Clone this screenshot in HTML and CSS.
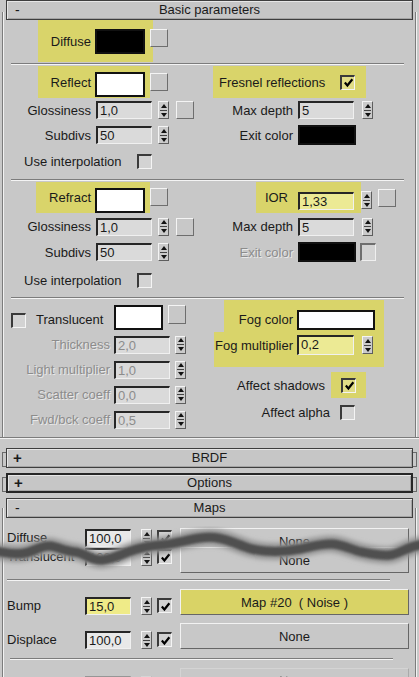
FILE: index.html
```html
<!DOCTYPE html>
<html>
<head>
<meta charset="utf-8">
<link rel="stylesheet" href="styles.css">
</head>
<body>
<div class="panel">
  <div class="rhead"><span class="sign">-</span><span class="title">Basic parameters</span></div>
  <div class="rbody">
    <div class="row rA">
      <div class="hl hl-diffuse"><span class="hlab">Diffuse</span><span class="sw sw-black sw-main"></span></div>
      <span class="btn btn-diffuse"></span>
    </div>
    <div class="sep sep1"></div>
    <div class="row rB">
      <div class="L">
        <div class="hl hl-reflect"><span class="hlab">Reflect</span><span class="sw sw-white sw-main sw-low"></span></div>
        <span class="btn btn-reflect"></span>
      </div>
      <div class="R">
        <div class="hl hl-fresnel"><span>Fresnel reflections</span><span class="chk chk-auto"><svg viewBox="0 0 12 12" width="11" height="11"><path d="M2 6l2.8 3.2L10.2 2.4" fill="none" stroke="#000" stroke-width="2.4"/></svg></span></div>
      </div>
    </div>
    <div class="row rC">
      <div class="L"><span class="lab">Glossiness</span><span class="inp">1,0</span><span class="spin"><i class="up"></i><i class="mid"></i><i class="dn"></i></span><span class="btn btn-map"></span></div>
      <div class="R"><span class="lab">Max depth</span><span class="inp">5</span><span class="spin spin-r"><i class="up"></i><i class="mid"></i><i class="dn"></i></span></div>
    </div>
    <div class="row rD">
      <div class="L"><span class="lab">Subdivs</span><span class="inp">50</span><span class="spin"><i class="up"></i><i class="mid"></i><i class="dn"></i></span></div>
      <div class="R"><span class="lab">Exit color</span><span class="sw sw-black sw-exit"></span></div>
    </div>
    <div class="row rE">
      <div class="L"><span class="interp">Use interpolation</span><span class="chk"></span></div>
    </div>
    <div class="sep sep2"></div>
    <div class="row rF">
      <div class="L">
        <div class="hl hl-refract"><span class="hlab">Refract</span><span class="sw sw-white sw-main sw-bottom"></span></div>
        <span class="btn btn-refract"></span>
      </div>
      <div class="R">
        <div class="hl hl-ior"><span class="hlab">IOR</span><span class="inp inp-y inp-ior">1,33</span></div>
        <span class="spin spin-ior"><i class="up"></i><i class="mid"></i><i class="dn"></i></span>
        <span class="btn btn-ior"></span>
      </div>
    </div>
    <div class="row rG">
      <div class="L"><span class="lab">Glossiness</span><span class="inp">1,0</span><span class="spin"><i class="up"></i><i class="mid"></i><i class="dn"></i></span><span class="btn btn-map"></span></div>
      <div class="R"><span class="lab">Max depth</span><span class="inp">5</span><span class="spin spin-r"><i class="up"></i><i class="mid"></i><i class="dn"></i></span></div>
    </div>
    <div class="row rH">
      <div class="L"><span class="lab">Subdivs</span><span class="inp">50</span><span class="spin"><i class="up"></i><i class="mid"></i><i class="dn"></i></span></div>
      <div class="R"><span class="lab dis">Exit color</span><span class="sw sw-black sw-exit"></span><span class="chk chk-dim"></span></div>
    </div>
    <div class="row rI">
      <div class="L"><span class="interp">Use interpolation</span><span class="chk"></span></div>
    </div>
    <div class="sep sep3"></div>
    <div class="sec3">
      <div class="c3L">
        <div class="trow"><span class="chk chk-tr"></span><span class="trtext">Translucent</span><span class="sw sw-white sw-tr"></span><span class="btn btn-tr"></span></div>
        <div class="prow"><span class="plab dis">Thickness</span><span class="inp inp-dis">2,0</span><span class="spin"><i class="up"></i><i class="mid"></i><i class="dn"></i></span></div>
        <div class="prow"><span class="plab dis">Light multiplier</span><span class="inp inp-dis">1,0</span><span class="spin"><i class="up"></i><i class="mid"></i><i class="dn"></i></span></div>
        <div class="prow"><span class="plab dis">Scatter coeff</span><span class="inp inp-dis">0,0</span><span class="spin"><i class="up"></i><i class="mid"></i><i class="dn"></i></span></div>
        <div class="prow"><span class="plab dis">Fwd/bck coeff</span><span class="inp inp-dis">0,5</span><span class="spin"><i class="up"></i><i class="mid"></i><i class="dn"></i></span></div>
      </div>
      <div class="c3R">
        <div class="hl hl-fogc"><span class="hlab">Fog color</span><span class="sw sw-white sw-fog"></span></div>
        <div class="hl hl-fogm"><span class="hlab">Fog multiplier</span><span class="inp inp-y inp-fog">0,2</span><span class="spin spin-fog"><i class="up"></i><i class="mid"></i><i class="dn"></i></span></div>
        <div class="asrow"><span class="astext">Affect shadows</span><span class="hl hl-as"><span class="chk"><svg viewBox="0 0 12 12" width="11" height="11"><path d="M2 6l2.8 3.2L10.2 2.4" fill="none" stroke="#000" stroke-width="2.4"/></svg></span></span></div>
        <div class="aarow"><span class="aatext">Affect alpha</span><span class="chk"></span></div>
      </div>
    </div>
  </div>

  <div class="rclosed first"><div class="rhead"><span class="sign plus">+</span><span class="title">BRDF</span></div></div>
  <div class="rclosed"><div class="rhead focus"><span class="sign plus">+</span><span class="title">Options</span></div></div>

  <div class="rmaps">
    <div class="rhead"><span class="sign">-</span><span class="title">Maps</span></div>
    <div class="mbody">
      <div class="mrow m1">
        <span class="mlab">Diffuse</span><span class="inp minp">100,0</span><span class="spin mspin"><i class="up"></i><i class="mid"></i><i class="dn"></i></span><span class="chk mchk"><svg viewBox="0 0 12 12" width="11" height="11"><path d="M2 6l2.8 3.2L10.2 2.4" fill="none" stroke="#000" stroke-width="2.4"/></svg></span><span class="mbtn">None</span>
      </div>
      <div class="mrow m2">
        <span class="mlab">Translucent</span><span class="inp minp">100,0</span><span class="spin mspin"><i class="up"></i><i class="mid"></i><i class="dn"></i></span><span class="chk mchk"><svg viewBox="0 0 12 12" width="11" height="11"><path d="M2 6l2.8 3.2L10.2 2.4" fill="none" stroke="#000" stroke-width="2.4"/></svg></span><span class="mbtn">None</span>
      </div>
      <div class="sep msep1"></div>
      <div class="mrow low m3">
        <span class="mlab">Bump</span><span class="inp minp inp-yb">15,0</span><span class="spin mspin"><i class="up"></i><i class="mid"></i><i class="dn"></i></span><span class="chk mchk"><svg viewBox="0 0 12 12" width="11" height="11"><path d="M2 6l2.8 3.2L10.2 2.4" fill="none" stroke="#000" stroke-width="2.4"/></svg></span><span class="mbtn mbtn-y">Map #20&nbsp;&nbsp;( Noise )</span>
      </div>
      <div class="mrow low m4">
        <span class="mlab">Displace</span><span class="inp minp">100,0</span><span class="spin mspin"><i class="up"></i><i class="mid"></i><i class="dn"></i></span><span class="chk mchk"><svg viewBox="0 0 12 12" width="11" height="11"><path d="M2 6l2.8 3.2L10.2 2.4" fill="none" stroke="#000" stroke-width="2.4"/></svg></span><span class="mbtn">None</span>
      </div>
      <div class="sep msep2"></div>
      <div class="mrow low m5">
        <span class="mlab"></span><span class="inp minp"></span><span class="spin mspin"><i class="up"></i><i class="mid"></i><i class="dn"></i></span><span class="chk mchk"></span><span class="mbtn mbtn-fade">None</span>
      </div>
    </div>
  </div>

  <svg class="tear" width="419" height="60" viewBox="0 0 419 60">
    <defs>
      <filter id="b1" x="-5%" y="-50%" width="110%" height="200%"><feGaussianBlur stdDeviation="2.4"/></filter>
      <filter id="b2" x="-5%" y="-50%" width="110%" height="200%"><feGaussianBlur stdDeviation="1.2"/></filter>
    </defs>
    <path d="M-5 26 C 8 28, 15 30, 25 28 S 42 20, 50 21 S 65 26, 75 27 S 92 36, 102 35 S 120 30, 128 27 S 145 21, 160 20 S 185 15, 200 13 S 225 14, 235 18 S 252 25, 265 26 S 290 26, 300 24 S 322 18, 333 19 S 352 25, 362 27 S 380 31, 390 30 S 405 22, 424 19" fill="none" stroke="#8e8e8e" stroke-width="16" filter="url(#b1)"/>
    <path d="M-5 26 C 8 28, 15 30, 25 28 S 42 20, 50 21 S 65 26, 75 27 S 92 36, 102 35 S 120 30, 128 27 S 145 21, 160 20 S 185 15, 200 13 S 225 14, 235 18 S 252 25, 265 26 S 290 26, 300 24 S 322 18, 333 19 S 352 25, 362 27 S 380 31, 390 30 S 405 22, 424 19" fill="none" stroke="#505050" stroke-width="9" filter="url(#b2)"/>
  </svg>
</div>
</body>
</html>
```

FILE: styles.css
```css
* { box-sizing: border-box; }
html, body { margin: 0; padding: 0; }
body {
  width: 419px;
  height: 677px;
  overflow: hidden;
  background: #c8c8c8;
  font-family: "Liberation Sans", Arial, sans-serif;
  font-size: 13px;
  color: #1a1a1a;
}
.panel { position: relative; width: 419px; height: 677px; overflow: hidden; }

/* rollout headers */
.rhead {
  position: relative;
  z-index: 1;
  height: 20px;
  margin: 0 6px;
  border: 1px solid #3e3e3e;
  background: #c6c6c6;
  box-shadow: inset 1px 1px 0 #e6e6e6, inset -1px -1px 0 #a4a4a4;
  display: flex;
  align-items: center;
  line-height: 18px;
}
.rhead.focus { border: 2px solid #262626; }
.rhead .sign { width: 22px; padding-left: 8px; font-size: 14px; }
.rhead .sign.plus { font-weight: bold; padding-left: 6px; font-size: 15px; }
.rhead .title { flex: 1; text-align: center; margin-right: 22px; }

/* basic parameters body */
.rbody {
  margin-top: -8px;
  padding-top: 8px;
  height: 426px;
  border-bottom: 1px solid #7c7c7c;
  box-shadow: 0 1px 0 #f2f2f2;
  background:
    linear-gradient(#7c7c7c, #7c7c7c) 2px 0 / 1px 100% no-repeat,
    linear-gradient(#f2f2f2, #f2f2f2) 3px 0 / 1px 100% no-repeat,
    linear-gradient(#7c7c7c, #7c7c7c) 415px 0 / 1px 100% no-repeat,
    linear-gradient(#f2f2f2, #f2f2f2) 416px 0 / 1px 100% no-repeat;
}

.row { display: flex; align-items: center; }
.L { width: 209px; flex: none; display: flex; align-items: center; }
.R { flex: 1; display: flex; align-items: center; }

.rA { height: 42px; align-items: flex-start; }
.rB { height: 32px; }
.rB .L, .rB .R { align-items: flex-start; height: 32px; }
.rC { height: 24px; }
.rD { height: 26px; }
.rE { height: 26px; }
.rF { height: 32px; }
.rF .L, .rF .R { align-items: flex-start; height: 32px; }
.rG { height: 25px; }
.rH { height: 26px; }
.rI { height: 31px; }

.sep {
  height: 2px;
  border-top: 1px solid #7c7c7c;
  border-bottom: 1px solid #f4f4f4;
}
.sep1 { margin: 1px 15px 1px 11px; }
.sep2 { margin: 5px 15px 1px 11px; }
.sep3 { margin: 1px 15px 1px 11px; }

/* highlight boxes */
.hl { background: #d9d46a; display: flex; align-items: center; flex: none; }
.hlab { flex: 1; text-align: right; padding-right: 4px; white-space: nowrap; }

.hl-diffuse { margin-left: 38px; width: 115px; height: 42px; padding-right: 8px; }
.btn-diffuse { margin-left: -3px; margin-top: 9px; }

.hl-reflect { margin-left: 38px; width: 112px; height: 32px; padding-right: 5px; }
.sw-low { align-self: flex-start; margin-top: 6px; }
.btn-reflect { margin-top: 7px; }

.hl-fresnel { margin-left: 4px; width: 153px; height: 32px; padding-left: 6px; padding-right: 11px; }
.chk-auto { margin-left: auto; }

.hl-refract { margin-left: 36px; width: 114px; height: 31px; padding-right: 5px; }
.sw-bottom { align-self: flex-end; }
.btn-refract { margin-top: 6px; }

.hl-ior { margin-left: 47px; width: 105px; height: 31px; padding-right: 7px; }
.hl-ior .hlab { padding-right: 5px; }
.inp-ior { align-self: flex-end; margin-bottom: 3px; height: 20px; }
.spin-ior { margin-top: 9px; }
.btn-ior { margin-left: 6px; margin-top: 7px; }

/* components */
.lab { flex: none; text-align: right; white-space: nowrap; }
.L .lab { width: 91px; }
.R .lab { width: 84px; }
.dis { color: #8c8c8c; text-shadow: 1px 1px 0 #e8e8e8; }

.inp {
  flex: none;
  width: 56px;
  height: 18px;
  margin-left: 5px;
  background: #dadada;
  border-style: solid;
  border-width: 2px 1px 1px 2px;
  border-color: #262626 #f0f0f0 #f0f0f0 #262626;
  padding-left: 2px;
  line-height: 15px;
  white-space: nowrap;
}
.inp-y { background: #ecea94; }
.inp-dis { color: #8c8c8c; }

.spin {
  flex: none;
  width: 11px;
  height: 18px;
  margin-left: 6px;
  background: #cbcbcb;
  border: 1px solid;
  border-color: #f4f4f4 #5e5e5e #5e5e5e #f4f4f4;
  display: flex;
  flex-direction: column;
  align-items: center;
  justify-content: center;
  gap: 2px;
}
.spin i { display: block; width: 0; height: 0; }
.spin .up { border-left: 3px solid transparent; border-right: 3px solid transparent; border-bottom: 4px solid #111; }
.spin .dn { border-left: 3px solid transparent; border-right: 3px solid transparent; border-top: 4px solid #111; }
.spin .mid { width: 7px; height: 1px; background: #444; }
.spin-r { margin-left: 8px; }
.spin-ior { margin-left: 0; }

.btn {
  flex: none;
  width: 18px;
  height: 18px;
  background: #c8c8c8;
  border: 1px solid;
  border-color: #f4f4f4 #6e6e6e #6e6e6e #f4f4f4;
}
.btn-map { margin-left: 7px; }

.sw { flex: none; border: 2px solid #111; }
.sw-black { background: #000; }
.sw-white { background: #fff; }
.sw-main { width: 50px; height: 25px; }
.hl-diffuse .sw-main { align-self: center; }
.sw-exit { width: 58px; height: 20px; margin-left: 5px; }

.chk {
  flex: none;
  width: 15px;
  height: 15px;
  border-style: solid;
  border-width: 2px 1px 1px 2px;
  border-color: #3a3a3a #f4f4f4 #f4f4f4 #3a3a3a;
  background: rgba(255, 255, 255, 0.2);
  display: flex;
  align-items: center;
  justify-content: center;
}
.chk svg { display: block; }
.chk-dim { width: 16px; height: 18px; margin-left: 4px; border-color: #6e6e6e #efefef #efefef #6e6e6e; }

.interp { margin-left: 24px; width: 113px; flex: none; white-space: nowrap; }

/* translucent / fog section */
.sec3 { display: flex; height: 137px; }
.c3L { width: 209px; flex: none; }
.c3R { flex: 1; display: flex; flex-direction: column; align-items: flex-start; }

.trow { display: flex; align-items: flex-start; height: 32px; }
.chk-tr { margin-left: 11px; margin-top: 13px; }
.trtext { margin-left: 10px; margin-top: 11px; width: 78px; line-height: 18px; flex: none; }
.sw-tr { width: 49px; height: 25px; margin-top: 5px; }
.btn-tr { margin-left: 5px; margin-top: 5px; height: 19px; }

.prow { display: flex; align-items: center; height: 25px; }
.plab { width: 110px; flex: none; text-align: right; white-space: nowrap; }
.prow .inp { margin-left: 4px; }
.prow .spin { margin-left: 5px; }

.hl-fogc { margin-left: 15px; width: 160px; height: 32px; padding-top: 7px; padding-right: 9px; }
.hl-fogc .hlab { padding-right: 4px; }
.sw-fog { width: 78px; height: 20px; background: #fbfcff; }
.hl-fogm { margin-left: 5px; width: 170px; height: 35px; padding-bottom: 9px; padding-right: 11px; }
.inp-fog { width: 57px; height: 20px; margin-left: 0; }
.hl-fogm .hlab { padding-right: 4px; }
.spin-fog { margin-left: 8px; }

.asrow { display: flex; align-items: center; margin-top: 5px; height: 26px; }
.astext { width: 116px; text-align: right; flex: none; white-space: nowrap; }
.hl-as { margin-left: 6px; width: 35px; height: 26px; padding-left: 10px; }
.aarow { display: flex; align-items: center; height: 28px; }
.aatext { width: 121px; text-align: right; flex: none; white-space: nowrap; }
.aarow .chk { margin-left: 10px; }

/* collapsed rollouts */
.rclosed { position: relative; padding: 2px 0; margin-top: 1px; }
.rclosed.first { margin-top: 8px; }
.rclosed::before, .rclosed::after {
  content: "";
  position: absolute;
  top: 6px;
  height: 13px;
  width: 3px;
  border: 1px solid #6a6a6a;
}
.rclosed::before { left: 2px; border-right: none; }
.rclosed::after { right: 2px; border-left: none; }

/* maps */
.rmaps { margin-top: 1px; padding-top: 2px; }
.mbody {
  margin-top: -10px;
  padding-top: 10px;
  height: 200px;
  background:
    linear-gradient(#7c7c7c, #7c7c7c) 2px 0 / 1px 100% no-repeat,
    linear-gradient(#f2f2f2, #f2f2f2) 3px 0 / 1px 100% no-repeat,
    linear-gradient(#7c7c7c, #7c7c7c) 415px 0 / 1px 100% no-repeat,
    linear-gradient(#f2f2f2, #f2f2f2) 416px 0 / 1px 100% no-repeat;
}
.mrow { display: flex; align-items: flex-start; height: 26px; }
.m1 { margin-top: 10px; }
.m2 { margin-top: -7px; }
.m4 { margin-top: 8px; }
.m5 { opacity: 0.3; }
.mlab { margin-left: 7px; width: 78px; flex: none; line-height: 18px; margin-top: 1px; white-space: nowrap; }
.minp { width: 46px; margin-left: 0; margin-top: 1px; background: #e8e8e8; }
.inp-yb { background: #efeb88; }
.mspin { margin-left: 10px; margin-top: 1px; }
.mchk { margin-left: 5px; margin-top: 2px; }
.mbtn {
  flex: none;
  margin-left: 8px;
  width: 229px;
  height: 26px;
  background: #c8c8c8;
  border: 1px solid;
  border-color: #f2f2f2 #666 #666 #f2f2f2;
  display: flex;
  align-items: center;
  justify-content: center;
  white-space: nowrap;
}
.mbtn-fade { align-items: flex-start; padding-top: 4px; }
.mbtn-y { background: #d9d366; }
.low .mlab, .low .minp, .low .mspin { margin-top: 8px; }
.low .mchk { margin-top: 9px; }
.msep1 { margin: 6px 29px 8px 7px; }
.msep2 { margin: 9px 26px 8px 10px; }

.tear { position: absolute; left: 0; top: 525px; }
```
